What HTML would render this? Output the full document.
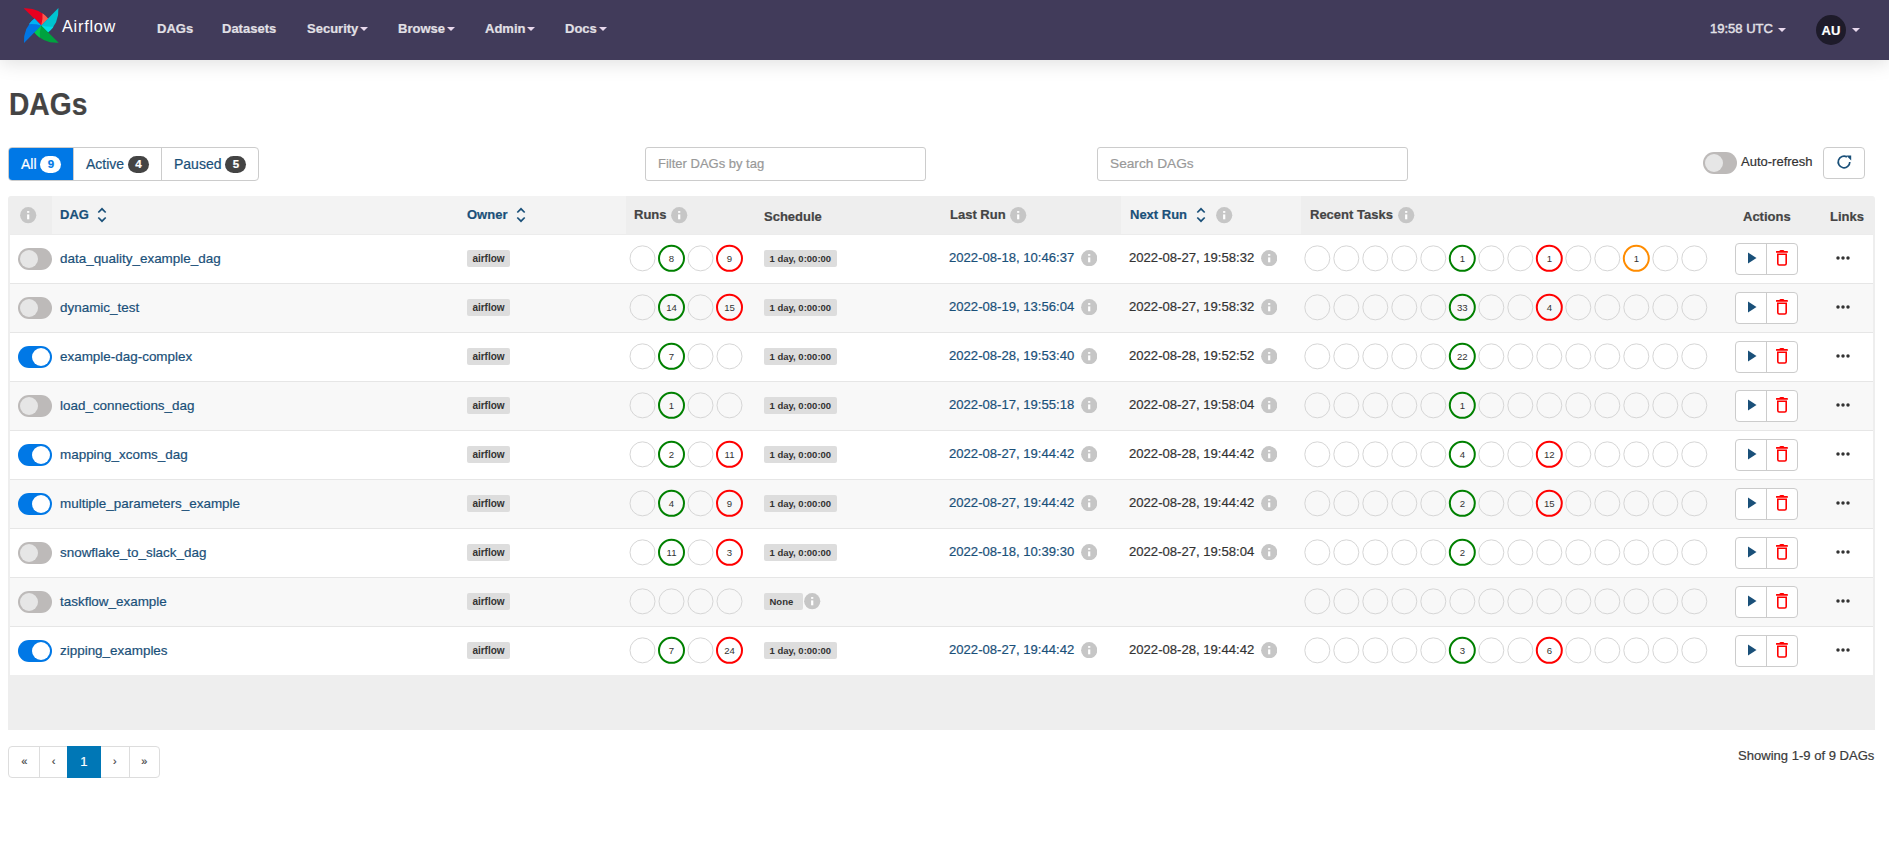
<!DOCTYPE html>
<html><head><meta charset="utf-8"><title>DAGs - Airflow</title>
<style>
*{box-sizing:border-box;margin:0;padding:0}
html,body{width:1889px;height:842px;overflow:hidden;background:#fff;font-family:"Liberation Sans",sans-serif;color:#333;-webkit-text-stroke:0.2px currentColor}
.abs{position:absolute}
.nav{position:absolute;left:0;top:0;width:1889px;height:60px;background:#413b5a;box-shadow:0 3px 18px rgba(0,0,0,.13)}
.nav .it{position:absolute;top:21px;font-size:13px;font-weight:bold;color:#e2e0e6;line-height:16px;white-space:nowrap}
.caret{display:inline-block;width:0;height:0;border-left:4px solid transparent;border-right:4px solid transparent;border-top:4px solid #e9d9ee;vertical-align:middle;margin-left:2px;position:relative;top:-0.5px}
h1{position:absolute;left:9px;top:86.5px;font-size:31px;font-weight:bold;color:#444;line-height:36px;transform:scaleX(0.91);transform-origin:0 0}
.btng{position:absolute;left:8px;top:147px;height:34px;width:251px;border:1px solid #ccc;border-radius:4px;overflow:hidden}
.btng div{position:absolute;top:0;height:32px;line-height:32px;font-size:14px;color:#1a5079;white-space:nowrap}
.badge{display:inline-block;background:#444;color:#fff;border-radius:9px;height:17px;min-width:21px;line-height:17px;font-size:11.5px;font-weight:bold;text-align:center;vertical-align:1px;padding:0 6px}
.inp{position:absolute;top:147px;height:34px;border:1px solid #ccc;border-radius:3px;font-size:14px;color:#999;line-height:32px;padding-left:12px}
.tbl{position:absolute;left:8px;top:196px;width:1867px;height:534px;background:#eee;border-radius:3px 3px 0 0}
.th{position:absolute;top:196px;height:38px;background:#eee}
.th.lt{background:#f3f3f3}
.hd{position:absolute;top:207px;font-size:13px;font-weight:bold;color:#444;line-height:16px;white-space:nowrap}
.hd.lnk{color:#1a5079}
.row{position:absolute;left:10px;width:1863px;height:49px;background:#fff;border-top:1px solid #e6e6e6}
.row.alt{background:#f8f8f8}
.tog{position:absolute;width:34px;height:22px;border-radius:11px;background:#bdbab9}
.tog::after{content:"";position:absolute;left:2px;top:2px;width:18px;height:18px;border-radius:9px;background:#e6e6e6}
.tog.on{background:#0078e6}
.tog.on::after{left:14px;background:#fff}
.dn{position:absolute;font-size:13.45px;color:#1a5079;line-height:16px;white-space:nowrap}
.own{-webkit-text-stroke:0;position:absolute;width:43px;height:17px;background:#ddd;border-radius:2px;font-size:10px;font-weight:bold;color:#333;text-align:center;line-height:17px}
.c{position:absolute;width:26px;height:26px;border-radius:13px;border:1px solid #d9d9d9;font-size:9px;color:#333;text-align:center;line-height:24px}
.cg{border:2px solid #008000;line-height:22px}
.cr{border:2px solid #ff0000;line-height:22px}
.co{border:2px solid #ffa500;line-height:22px}
.sch{-webkit-text-stroke:0;position:absolute;height:17px;background:#ddd;border-radius:2px;font-size:9.5px;font-weight:bold;color:#333;line-height:17px;padding:0 5.5px;white-space:nowrap}
.dt{position:absolute;font-size:13.1px;line-height:16px;white-space:nowrap}
.dt.lnk{color:#1a5079}
.info{position:absolute;width:16px;height:16px}
.info svg{display:block}
.sorti{position:absolute}
.act{position:absolute;width:63px;height:32px;border:1px solid #ccc;border-radius:4px;background:#fff}
.act .sep{position:absolute;left:30px;top:0;width:1px;height:30px;background:#ccc}
.dots{position:absolute;width:15px;height:4px}
</style></head><body>

<div class="nav">
<svg class="abs" style="left:22px;top:6px" width="38" height="38" viewBox="-19.2 -19.45 38 38">
<defs>
<path id="bl" d="M-17.5,-17.2 Q-2.15,-18.05 7,-6.7 L0,0 Z"/>
<path id="bt" d="M1.3,-12.3 Q4.6,-10 7,-6.7 L0,0 Q1.8,-6 1.3,-12.3 Z"/>
</defs>
<use href="#bl" fill="#e8001f"/><use href="#bt" fill="#fb5a4f"/>
<g transform="rotate(90)"><use href="#bl" fill="#00c4d0"/><use href="#bt" fill="#00dde6"/></g>
<g transform="rotate(180)"><use href="#bl" fill="#00a23f"/><use href="#bt" fill="#00c94f"/></g>
<g transform="rotate(270)"><use href="#bl" fill="#0076e4"/><use href="#bt" fill="#00b3f2"/></g>
</svg>
<div class="abs" style="left:62px;top:17.4px;font-size:16.3px;letter-spacing:0.75px;color:#fff;line-height:18px;-webkit-text-stroke:0">Airflow</div>
<div class="it" style="left:157px">DAGs</div>
<div class="it" style="left:222px">Datasets</div>
<div class="it" style="left:307px">Security<span class=caret></span></div>
<div class="it" style="left:398px">Browse<span class=caret></span></div>
<div class="it" style="left:485px">Admin<span class=caret></span></div>
<div class="it" style="left:565px">Docs<span class=caret></span></div>
<div class="it" style="left:1710px;font-weight:normal;-webkit-text-stroke:0.45px currentColor">19:58 UTC<span class="caret" style="margin-left:5.5px;top:0.2px"></span></div>
<div class="abs" style="left:1816px;top:15px;width:30px;height:30px;border-radius:15px;background:#1e1b2a;color:#fff;font-size:13px;font-weight:bold;text-align:center;line-height:31px">AU</div>
<div class="abs" style="left:1852px;top:28px;width:8px;height:4px;border-left:4px solid transparent;border-right:4px solid transparent;border-top:4px solid #e9d9ee"></div>
</div>
<h1>DAGs</h1>
<div class="btng">
<div style="left:0;width:64px;background:#0078e6;color:#fff;padding-left:12px">All <span class="badge" style="background:#fff;color:#0078e6">9</span></div>
<div style="left:64px;width:88px;border-left:1px solid #ccc;padding-left:12px">Active <span class="badge">4</span></div>
<div style="left:152px;width:97px;border-left:1px solid #ccc;padding-left:12px">Paused <span class="badge">5</span></div>
</div>
<div class="inp" style="left:645px;width:281px;font-size:13px">Filter DAGs by tag</div>
<div class="inp" style="left:1097px;width:311px;font-size:13.7px">Search DAGs</div>
<div class="tog abs" style="left:1703px;top:152px"></div>
<div class="abs" style="left:1741px;top:154px;font-size:13px;color:#333;line-height:16px">Auto-refresh</div>
<div class="abs" style="left:1823px;top:147px;width:42px;height:32px;border:1px solid #ccc;border-radius:4px"><svg style="position:absolute;left:11.9px;top:6.1px" width="16" height="16" viewBox="0 0 16 16"><path d="M13.8 8 A5.8 5.8 0 1 1 10.9 2.98" fill="none" stroke="#1a5079" stroke-width="1.7"/><path d="M10.2 1.4 L15.2 1.4 L15.2 6.6 Z" fill="#1a5079"/></svg></div>
<div class="tbl"></div>
<div class="th lt" style="left:52px;width:574px" ></div>
<div class="th lt" style="left:1121px;width:180px"></div>
<div class="abs" style="left:20px;top:207px"><span class="info" style="position:static"><svg viewBox="0 0 16.5 16.5" width="16.5" height="16.5"><circle cx="8.2" cy="8.2" r="8.1" fill="#c6c6c6"/><rect x="7.1" y="4.1" width="2.2" height="1.7" fill="#fff"/><rect x="7.1" y="7.4" width="2.2" height="4.9" fill="#fff"/></svg></span></div>
<div class="hd lnk" style="left:60px">DAG</div>
<svg class="sorti" style="left:97px;top:207px" width="10" height="16" viewBox="0 0 10 16"><path d="M1.3 5.5 L5 1.8 L8.7 5.5 M1.3 10.5 L5 14.2 L8.7 10.5" fill="none" stroke="#1a5079" stroke-width="1.7"/></svg>
<div class="hd lnk" style="left:467px">Owner</div>
<svg class="sorti" style="left:516px;top:207px" width="10" height="16" viewBox="0 0 10 16"><path d="M1.3 5.5 L5 1.8 L8.7 5.5 M1.3 10.5 L5 14.2 L8.7 10.5" fill="none" stroke="#1a5079" stroke-width="1.7"/></svg>
<div class="hd" style="left:634px">Runs</div>
<span class="info" style="left:671px;top:207px"><svg viewBox="0 0 16.5 16.5" width="16.5" height="16.5"><circle cx="8.2" cy="8.2" r="8.1" fill="#c6c6c6"/><rect x="7.1" y="4.1" width="2.2" height="1.7" fill="#fff"/><rect x="7.1" y="7.4" width="2.2" height="4.9" fill="#fff"/></svg></span>
<div class="hd" style="left:764px;top:209px">Schedule</div>
<div class="hd" style="left:950px">Last Run</div>
<span class="info" style="left:1010px;top:207px"><svg viewBox="0 0 16.5 16.5" width="16.5" height="16.5"><circle cx="8.2" cy="8.2" r="8.1" fill="#c6c6c6"/><rect x="7.1" y="4.1" width="2.2" height="1.7" fill="#fff"/><rect x="7.1" y="7.4" width="2.2" height="4.9" fill="#fff"/></svg></span>
<div class="hd lnk" style="left:1130px">Next Run</div>
<svg class="sorti" style="left:1196px;top:207px" width="10" height="16" viewBox="0 0 10 16"><path d="M1.3 5.5 L5 1.8 L8.7 5.5 M1.3 10.5 L5 14.2 L8.7 10.5" fill="none" stroke="#1a5079" stroke-width="1.7"/></svg>
<span class="info" style="left:1216px;top:207px"><svg viewBox="0 0 16.5 16.5" width="16.5" height="16.5"><circle cx="8.2" cy="8.2" r="8.1" fill="#c6c6c6"/><rect x="7.1" y="4.1" width="2.2" height="1.7" fill="#fff"/><rect x="7.1" y="7.4" width="2.2" height="4.9" fill="#fff"/></svg></span>
<div class="hd" style="left:1310px">Recent Tasks</div>
<span class="info" style="left:1398px;top:207px"><svg viewBox="0 0 16.5 16.5" width="16.5" height="16.5"><circle cx="8.2" cy="8.2" r="8.1" fill="#c6c6c6"/><rect x="7.1" y="4.1" width="2.2" height="1.7" fill="#fff"/><rect x="7.1" y="7.4" width="2.2" height="4.9" fill="#fff"/></svg></span>
<div class="hd" style="left:1743px;top:209px">Actions</div>
<div class="hd" style="left:1830px;top:209px">Links</div>
<div class="row" style="top:234px;border-top-color:#ececec"></div>
<div class="tog" style="left:18px;top:248px"></div>
<div class="dn" style="left:60px;top:251px">data_quality_example_dag</div>
<div class="own" style="left:467px;top:250px">airflow</div>
<svg class="abs" style="left:626px;top:234px" width="156" height="49" viewBox="626 234 156 49"><circle cx="642.5" cy="258.35" r="12.5" fill="none" stroke="#d6d6d6" stroke-width="1"/><circle cx="671.5" cy="258.35" r="12.5" fill="none" stroke="#008000" stroke-width="2"/><text x="671.5" y="261.85" text-anchor="middle" font-size="9.6" fill="#333" style="-webkit-text-stroke:0">8</text><circle cx="700.5" cy="258.35" r="12.5" fill="none" stroke="#d6d6d6" stroke-width="1"/><circle cx="729.5" cy="258.35" r="12.5" fill="none" stroke="#ff0000" stroke-width="2"/><text x="729.5" y="261.85" text-anchor="middle" font-size="9.6" fill="#333" style="-webkit-text-stroke:0">9</text></svg>
<div class="sch" style="left:764px;top:250px">1 day, 0:00:00</div>
<div class="dt lnk" style="left:949px;top:250px">2022-08-18, 10:46:37</div>
<span class="info" style="left:1080.5px;top:249.8px"><svg viewBox="0 0 16.5 16.5" width="16.5" height="16.5"><circle cx="8.2" cy="8.2" r="8.1" fill="#c6c6c6"/><rect x="7.1" y="4.1" width="2.2" height="1.7" fill="#fff"/><rect x="7.1" y="7.4" width="2.2" height="4.9" fill="#fff"/></svg></span>
<div class="dt" style="left:1129px;top:250px">2022-08-27, 19:58:32</div>
<span class="info" style="left:1260.5px;top:249.8px"><svg viewBox="0 0 16.5 16.5" width="16.5" height="16.5"><circle cx="8.2" cy="8.2" r="8.1" fill="#c6c6c6"/><rect x="7.1" y="4.1" width="2.2" height="1.7" fill="#fff"/><rect x="7.1" y="7.4" width="2.2" height="4.9" fill="#fff"/></svg></span>
<svg class="abs" style="left:1300px;top:234px" width="446" height="49" viewBox="1300 234 446 49"><circle cx="1317.3" cy="258.35" r="12.5" fill="none" stroke="#d6d6d6" stroke-width="1"/><circle cx="1346.3" cy="258.35" r="12.5" fill="none" stroke="#d6d6d6" stroke-width="1"/><circle cx="1375.3" cy="258.35" r="12.5" fill="none" stroke="#d6d6d6" stroke-width="1"/><circle cx="1404.3" cy="258.35" r="12.5" fill="none" stroke="#d6d6d6" stroke-width="1"/><circle cx="1433.3" cy="258.35" r="12.5" fill="none" stroke="#d6d6d6" stroke-width="1"/><circle cx="1462.3" cy="258.35" r="12.5" fill="none" stroke="#008000" stroke-width="2"/><text x="1462.3" y="261.85" text-anchor="middle" font-size="9.6" fill="#333" style="-webkit-text-stroke:0">1</text><circle cx="1491.3" cy="258.35" r="12.5" fill="none" stroke="#d6d6d6" stroke-width="1"/><circle cx="1520.3" cy="258.35" r="12.5" fill="none" stroke="#d6d6d6" stroke-width="1"/><circle cx="1549.3" cy="258.35" r="12.5" fill="none" stroke="#ff0000" stroke-width="2"/><text x="1549.3" y="261.85" text-anchor="middle" font-size="9.6" fill="#333" style="-webkit-text-stroke:0">1</text><circle cx="1578.3" cy="258.35" r="12.5" fill="none" stroke="#d6d6d6" stroke-width="1"/><circle cx="1607.3" cy="258.35" r="12.5" fill="none" stroke="#d6d6d6" stroke-width="1"/><circle cx="1636.3" cy="258.35" r="12.5" fill="none" stroke="#ff8c00" stroke-width="2"/><text x="1636.3" y="261.85" text-anchor="middle" font-size="9.6" fill="#333" style="-webkit-text-stroke:0">1</text><circle cx="1665.3" cy="258.35" r="12.5" fill="none" stroke="#d6d6d6" stroke-width="1"/><circle cx="1694.3" cy="258.35" r="12.5" fill="none" stroke="#d6d6d6" stroke-width="1"/></svg>
<div class="act" style="left:1735px;top:243px"><div class="sep"></div><svg style="position:absolute;left:11px;top:7.5px" width="10" height="12" viewBox="0 0 10 12"><path d="M1 0.5 L9.5 6 L1 11.5 Z" fill="#1a5079"/></svg><svg style="position:absolute;left:40px;top:6px" width="12" height="16" viewBox="0 0 12 16"><path d="M3.8 1.2 Q5.85 -0.2 7.9 1.2" stroke="#ff0000" stroke-width="1.4" fill="none"/><path d="M0.6 1.9 H11.1" stroke="#ff0000" stroke-width="1.8" stroke-linecap="round" fill="none"/><path d="M1.8 4.2 V13.6 Q1.8 15 3.2 15 H8.8 Q10.2 15 10.2 13.6 V4.2 Z" stroke="#ff0000" stroke-width="1.6" fill="none"/></svg></div>
<svg class="dots" style="left:1836px;top:256px" viewBox="0 0 15 4"><circle cx="2" cy="2" r="1.75" fill="#333"/><circle cx="7" cy="2" r="1.75" fill="#333"/><circle cx="12" cy="2" r="1.75" fill="#333"/></svg>
<div class="row alt" style="top:283px"></div>
<div class="tog" style="left:18px;top:297px"></div>
<div class="dn" style="left:60px;top:300px">dynamic_test</div>
<div class="own" style="left:467px;top:299px">airflow</div>
<svg class="abs" style="left:626px;top:283px" width="156" height="49" viewBox="626 283 156 49"><circle cx="642.5" cy="307.35" r="12.5" fill="none" stroke="#d6d6d6" stroke-width="1"/><circle cx="671.5" cy="307.35" r="12.5" fill="none" stroke="#008000" stroke-width="2"/><text x="671.5" y="310.85" text-anchor="middle" font-size="9.6" fill="#333" style="-webkit-text-stroke:0">14</text><circle cx="700.5" cy="307.35" r="12.5" fill="none" stroke="#d6d6d6" stroke-width="1"/><circle cx="729.5" cy="307.35" r="12.5" fill="none" stroke="#ff0000" stroke-width="2"/><text x="729.5" y="310.85" text-anchor="middle" font-size="9.6" fill="#333" style="-webkit-text-stroke:0">15</text></svg>
<div class="sch" style="left:764px;top:299px">1 day, 0:00:00</div>
<div class="dt lnk" style="left:949px;top:299px">2022-08-19, 13:56:04</div>
<span class="info" style="left:1080.5px;top:298.8px"><svg viewBox="0 0 16.5 16.5" width="16.5" height="16.5"><circle cx="8.2" cy="8.2" r="8.1" fill="#c6c6c6"/><rect x="7.1" y="4.1" width="2.2" height="1.7" fill="#fff"/><rect x="7.1" y="7.4" width="2.2" height="4.9" fill="#fff"/></svg></span>
<div class="dt" style="left:1129px;top:299px">2022-08-27, 19:58:32</div>
<span class="info" style="left:1260.5px;top:298.8px"><svg viewBox="0 0 16.5 16.5" width="16.5" height="16.5"><circle cx="8.2" cy="8.2" r="8.1" fill="#c6c6c6"/><rect x="7.1" y="4.1" width="2.2" height="1.7" fill="#fff"/><rect x="7.1" y="7.4" width="2.2" height="4.9" fill="#fff"/></svg></span>
<svg class="abs" style="left:1300px;top:283px" width="446" height="49" viewBox="1300 283 446 49"><circle cx="1317.3" cy="307.35" r="12.5" fill="none" stroke="#d6d6d6" stroke-width="1"/><circle cx="1346.3" cy="307.35" r="12.5" fill="none" stroke="#d6d6d6" stroke-width="1"/><circle cx="1375.3" cy="307.35" r="12.5" fill="none" stroke="#d6d6d6" stroke-width="1"/><circle cx="1404.3" cy="307.35" r="12.5" fill="none" stroke="#d6d6d6" stroke-width="1"/><circle cx="1433.3" cy="307.35" r="12.5" fill="none" stroke="#d6d6d6" stroke-width="1"/><circle cx="1462.3" cy="307.35" r="12.5" fill="none" stroke="#008000" stroke-width="2"/><text x="1462.3" y="310.85" text-anchor="middle" font-size="9.6" fill="#333" style="-webkit-text-stroke:0">33</text><circle cx="1491.3" cy="307.35" r="12.5" fill="none" stroke="#d6d6d6" stroke-width="1"/><circle cx="1520.3" cy="307.35" r="12.5" fill="none" stroke="#d6d6d6" stroke-width="1"/><circle cx="1549.3" cy="307.35" r="12.5" fill="none" stroke="#ff0000" stroke-width="2"/><text x="1549.3" y="310.85" text-anchor="middle" font-size="9.6" fill="#333" style="-webkit-text-stroke:0">4</text><circle cx="1578.3" cy="307.35" r="12.5" fill="none" stroke="#d6d6d6" stroke-width="1"/><circle cx="1607.3" cy="307.35" r="12.5" fill="none" stroke="#d6d6d6" stroke-width="1"/><circle cx="1636.3" cy="307.35" r="12.5" fill="none" stroke="#d6d6d6" stroke-width="1"/><circle cx="1665.3" cy="307.35" r="12.5" fill="none" stroke="#d6d6d6" stroke-width="1"/><circle cx="1694.3" cy="307.35" r="12.5" fill="none" stroke="#d6d6d6" stroke-width="1"/></svg>
<div class="act" style="left:1735px;top:292px"><div class="sep"></div><svg style="position:absolute;left:11px;top:7.5px" width="10" height="12" viewBox="0 0 10 12"><path d="M1 0.5 L9.5 6 L1 11.5 Z" fill="#1a5079"/></svg><svg style="position:absolute;left:40px;top:6px" width="12" height="16" viewBox="0 0 12 16"><path d="M3.8 1.2 Q5.85 -0.2 7.9 1.2" stroke="#ff0000" stroke-width="1.4" fill="none"/><path d="M0.6 1.9 H11.1" stroke="#ff0000" stroke-width="1.8" stroke-linecap="round" fill="none"/><path d="M1.8 4.2 V13.6 Q1.8 15 3.2 15 H8.8 Q10.2 15 10.2 13.6 V4.2 Z" stroke="#ff0000" stroke-width="1.6" fill="none"/></svg></div>
<svg class="dots" style="left:1836px;top:305px" viewBox="0 0 15 4"><circle cx="2" cy="2" r="1.75" fill="#333"/><circle cx="7" cy="2" r="1.75" fill="#333"/><circle cx="12" cy="2" r="1.75" fill="#333"/></svg>
<div class="row" style="top:332px"></div>
<div class="tog on" style="left:18px;top:346px"></div>
<div class="dn" style="left:60px;top:349px">example-dag-complex</div>
<div class="own" style="left:467px;top:348px">airflow</div>
<svg class="abs" style="left:626px;top:332px" width="156" height="49" viewBox="626 332 156 49"><circle cx="642.5" cy="356.35" r="12.5" fill="none" stroke="#d6d6d6" stroke-width="1"/><circle cx="671.5" cy="356.35" r="12.5" fill="none" stroke="#008000" stroke-width="2"/><text x="671.5" y="359.85" text-anchor="middle" font-size="9.6" fill="#333" style="-webkit-text-stroke:0">7</text><circle cx="700.5" cy="356.35" r="12.5" fill="none" stroke="#d6d6d6" stroke-width="1"/><circle cx="729.5" cy="356.35" r="12.5" fill="none" stroke="#d6d6d6" stroke-width="1"/></svg>
<div class="sch" style="left:764px;top:348px">1 day, 0:00:00</div>
<div class="dt lnk" style="left:949px;top:348px">2022-08-28, 19:53:40</div>
<span class="info" style="left:1080.5px;top:347.8px"><svg viewBox="0 0 16.5 16.5" width="16.5" height="16.5"><circle cx="8.2" cy="8.2" r="8.1" fill="#c6c6c6"/><rect x="7.1" y="4.1" width="2.2" height="1.7" fill="#fff"/><rect x="7.1" y="7.4" width="2.2" height="4.9" fill="#fff"/></svg></span>
<div class="dt" style="left:1129px;top:348px">2022-08-28, 19:52:52</div>
<span class="info" style="left:1260.5px;top:347.8px"><svg viewBox="0 0 16.5 16.5" width="16.5" height="16.5"><circle cx="8.2" cy="8.2" r="8.1" fill="#c6c6c6"/><rect x="7.1" y="4.1" width="2.2" height="1.7" fill="#fff"/><rect x="7.1" y="7.4" width="2.2" height="4.9" fill="#fff"/></svg></span>
<svg class="abs" style="left:1300px;top:332px" width="446" height="49" viewBox="1300 332 446 49"><circle cx="1317.3" cy="356.35" r="12.5" fill="none" stroke="#d6d6d6" stroke-width="1"/><circle cx="1346.3" cy="356.35" r="12.5" fill="none" stroke="#d6d6d6" stroke-width="1"/><circle cx="1375.3" cy="356.35" r="12.5" fill="none" stroke="#d6d6d6" stroke-width="1"/><circle cx="1404.3" cy="356.35" r="12.5" fill="none" stroke="#d6d6d6" stroke-width="1"/><circle cx="1433.3" cy="356.35" r="12.5" fill="none" stroke="#d6d6d6" stroke-width="1"/><circle cx="1462.3" cy="356.35" r="12.5" fill="none" stroke="#008000" stroke-width="2"/><text x="1462.3" y="359.85" text-anchor="middle" font-size="9.6" fill="#333" style="-webkit-text-stroke:0">22</text><circle cx="1491.3" cy="356.35" r="12.5" fill="none" stroke="#d6d6d6" stroke-width="1"/><circle cx="1520.3" cy="356.35" r="12.5" fill="none" stroke="#d6d6d6" stroke-width="1"/><circle cx="1549.3" cy="356.35" r="12.5" fill="none" stroke="#d6d6d6" stroke-width="1"/><circle cx="1578.3" cy="356.35" r="12.5" fill="none" stroke="#d6d6d6" stroke-width="1"/><circle cx="1607.3" cy="356.35" r="12.5" fill="none" stroke="#d6d6d6" stroke-width="1"/><circle cx="1636.3" cy="356.35" r="12.5" fill="none" stroke="#d6d6d6" stroke-width="1"/><circle cx="1665.3" cy="356.35" r="12.5" fill="none" stroke="#d6d6d6" stroke-width="1"/><circle cx="1694.3" cy="356.35" r="12.5" fill="none" stroke="#d6d6d6" stroke-width="1"/></svg>
<div class="act" style="left:1735px;top:341px"><div class="sep"></div><svg style="position:absolute;left:11px;top:7.5px" width="10" height="12" viewBox="0 0 10 12"><path d="M1 0.5 L9.5 6 L1 11.5 Z" fill="#1a5079"/></svg><svg style="position:absolute;left:40px;top:6px" width="12" height="16" viewBox="0 0 12 16"><path d="M3.8 1.2 Q5.85 -0.2 7.9 1.2" stroke="#ff0000" stroke-width="1.4" fill="none"/><path d="M0.6 1.9 H11.1" stroke="#ff0000" stroke-width="1.8" stroke-linecap="round" fill="none"/><path d="M1.8 4.2 V13.6 Q1.8 15 3.2 15 H8.8 Q10.2 15 10.2 13.6 V4.2 Z" stroke="#ff0000" stroke-width="1.6" fill="none"/></svg></div>
<svg class="dots" style="left:1836px;top:354px" viewBox="0 0 15 4"><circle cx="2" cy="2" r="1.75" fill="#333"/><circle cx="7" cy="2" r="1.75" fill="#333"/><circle cx="12" cy="2" r="1.75" fill="#333"/></svg>
<div class="row alt" style="top:381px"></div>
<div class="tog" style="left:18px;top:395px"></div>
<div class="dn" style="left:60px;top:398px">load_connections_dag</div>
<div class="own" style="left:467px;top:397px">airflow</div>
<svg class="abs" style="left:626px;top:381px" width="156" height="49" viewBox="626 381 156 49"><circle cx="642.5" cy="405.35" r="12.5" fill="none" stroke="#d6d6d6" stroke-width="1"/><circle cx="671.5" cy="405.35" r="12.5" fill="none" stroke="#008000" stroke-width="2"/><text x="671.5" y="408.85" text-anchor="middle" font-size="9.6" fill="#333" style="-webkit-text-stroke:0">1</text><circle cx="700.5" cy="405.35" r="12.5" fill="none" stroke="#d6d6d6" stroke-width="1"/><circle cx="729.5" cy="405.35" r="12.5" fill="none" stroke="#d6d6d6" stroke-width="1"/></svg>
<div class="sch" style="left:764px;top:397px">1 day, 0:00:00</div>
<div class="dt lnk" style="left:949px;top:397px">2022-08-17, 19:55:18</div>
<span class="info" style="left:1080.5px;top:396.8px"><svg viewBox="0 0 16.5 16.5" width="16.5" height="16.5"><circle cx="8.2" cy="8.2" r="8.1" fill="#c6c6c6"/><rect x="7.1" y="4.1" width="2.2" height="1.7" fill="#fff"/><rect x="7.1" y="7.4" width="2.2" height="4.9" fill="#fff"/></svg></span>
<div class="dt" style="left:1129px;top:397px">2022-08-27, 19:58:04</div>
<span class="info" style="left:1260.5px;top:396.8px"><svg viewBox="0 0 16.5 16.5" width="16.5" height="16.5"><circle cx="8.2" cy="8.2" r="8.1" fill="#c6c6c6"/><rect x="7.1" y="4.1" width="2.2" height="1.7" fill="#fff"/><rect x="7.1" y="7.4" width="2.2" height="4.9" fill="#fff"/></svg></span>
<svg class="abs" style="left:1300px;top:381px" width="446" height="49" viewBox="1300 381 446 49"><circle cx="1317.3" cy="405.35" r="12.5" fill="none" stroke="#d6d6d6" stroke-width="1"/><circle cx="1346.3" cy="405.35" r="12.5" fill="none" stroke="#d6d6d6" stroke-width="1"/><circle cx="1375.3" cy="405.35" r="12.5" fill="none" stroke="#d6d6d6" stroke-width="1"/><circle cx="1404.3" cy="405.35" r="12.5" fill="none" stroke="#d6d6d6" stroke-width="1"/><circle cx="1433.3" cy="405.35" r="12.5" fill="none" stroke="#d6d6d6" stroke-width="1"/><circle cx="1462.3" cy="405.35" r="12.5" fill="none" stroke="#008000" stroke-width="2"/><text x="1462.3" y="408.85" text-anchor="middle" font-size="9.6" fill="#333" style="-webkit-text-stroke:0">1</text><circle cx="1491.3" cy="405.35" r="12.5" fill="none" stroke="#d6d6d6" stroke-width="1"/><circle cx="1520.3" cy="405.35" r="12.5" fill="none" stroke="#d6d6d6" stroke-width="1"/><circle cx="1549.3" cy="405.35" r="12.5" fill="none" stroke="#d6d6d6" stroke-width="1"/><circle cx="1578.3" cy="405.35" r="12.5" fill="none" stroke="#d6d6d6" stroke-width="1"/><circle cx="1607.3" cy="405.35" r="12.5" fill="none" stroke="#d6d6d6" stroke-width="1"/><circle cx="1636.3" cy="405.35" r="12.5" fill="none" stroke="#d6d6d6" stroke-width="1"/><circle cx="1665.3" cy="405.35" r="12.5" fill="none" stroke="#d6d6d6" stroke-width="1"/><circle cx="1694.3" cy="405.35" r="12.5" fill="none" stroke="#d6d6d6" stroke-width="1"/></svg>
<div class="act" style="left:1735px;top:390px"><div class="sep"></div><svg style="position:absolute;left:11px;top:7.5px" width="10" height="12" viewBox="0 0 10 12"><path d="M1 0.5 L9.5 6 L1 11.5 Z" fill="#1a5079"/></svg><svg style="position:absolute;left:40px;top:6px" width="12" height="16" viewBox="0 0 12 16"><path d="M3.8 1.2 Q5.85 -0.2 7.9 1.2" stroke="#ff0000" stroke-width="1.4" fill="none"/><path d="M0.6 1.9 H11.1" stroke="#ff0000" stroke-width="1.8" stroke-linecap="round" fill="none"/><path d="M1.8 4.2 V13.6 Q1.8 15 3.2 15 H8.8 Q10.2 15 10.2 13.6 V4.2 Z" stroke="#ff0000" stroke-width="1.6" fill="none"/></svg></div>
<svg class="dots" style="left:1836px;top:403px" viewBox="0 0 15 4"><circle cx="2" cy="2" r="1.75" fill="#333"/><circle cx="7" cy="2" r="1.75" fill="#333"/><circle cx="12" cy="2" r="1.75" fill="#333"/></svg>
<div class="row" style="top:430px"></div>
<div class="tog on" style="left:18px;top:444px"></div>
<div class="dn" style="left:60px;top:447px">mapping_xcoms_dag</div>
<div class="own" style="left:467px;top:446px">airflow</div>
<svg class="abs" style="left:626px;top:430px" width="156" height="49" viewBox="626 430 156 49"><circle cx="642.5" cy="454.35" r="12.5" fill="none" stroke="#d6d6d6" stroke-width="1"/><circle cx="671.5" cy="454.35" r="12.5" fill="none" stroke="#008000" stroke-width="2"/><text x="671.5" y="457.85" text-anchor="middle" font-size="9.6" fill="#333" style="-webkit-text-stroke:0">2</text><circle cx="700.5" cy="454.35" r="12.5" fill="none" stroke="#d6d6d6" stroke-width="1"/><circle cx="729.5" cy="454.35" r="12.5" fill="none" stroke="#ff0000" stroke-width="2"/><text x="729.5" y="457.85" text-anchor="middle" font-size="9.6" fill="#333" style="-webkit-text-stroke:0">11</text></svg>
<div class="sch" style="left:764px;top:446px">1 day, 0:00:00</div>
<div class="dt lnk" style="left:949px;top:446px">2022-08-27, 19:44:42</div>
<span class="info" style="left:1080.5px;top:445.8px"><svg viewBox="0 0 16.5 16.5" width="16.5" height="16.5"><circle cx="8.2" cy="8.2" r="8.1" fill="#c6c6c6"/><rect x="7.1" y="4.1" width="2.2" height="1.7" fill="#fff"/><rect x="7.1" y="7.4" width="2.2" height="4.9" fill="#fff"/></svg></span>
<div class="dt" style="left:1129px;top:446px">2022-08-28, 19:44:42</div>
<span class="info" style="left:1260.5px;top:445.8px"><svg viewBox="0 0 16.5 16.5" width="16.5" height="16.5"><circle cx="8.2" cy="8.2" r="8.1" fill="#c6c6c6"/><rect x="7.1" y="4.1" width="2.2" height="1.7" fill="#fff"/><rect x="7.1" y="7.4" width="2.2" height="4.9" fill="#fff"/></svg></span>
<svg class="abs" style="left:1300px;top:430px" width="446" height="49" viewBox="1300 430 446 49"><circle cx="1317.3" cy="454.35" r="12.5" fill="none" stroke="#d6d6d6" stroke-width="1"/><circle cx="1346.3" cy="454.35" r="12.5" fill="none" stroke="#d6d6d6" stroke-width="1"/><circle cx="1375.3" cy="454.35" r="12.5" fill="none" stroke="#d6d6d6" stroke-width="1"/><circle cx="1404.3" cy="454.35" r="12.5" fill="none" stroke="#d6d6d6" stroke-width="1"/><circle cx="1433.3" cy="454.35" r="12.5" fill="none" stroke="#d6d6d6" stroke-width="1"/><circle cx="1462.3" cy="454.35" r="12.5" fill="none" stroke="#008000" stroke-width="2"/><text x="1462.3" y="457.85" text-anchor="middle" font-size="9.6" fill="#333" style="-webkit-text-stroke:0">4</text><circle cx="1491.3" cy="454.35" r="12.5" fill="none" stroke="#d6d6d6" stroke-width="1"/><circle cx="1520.3" cy="454.35" r="12.5" fill="none" stroke="#d6d6d6" stroke-width="1"/><circle cx="1549.3" cy="454.35" r="12.5" fill="none" stroke="#ff0000" stroke-width="2"/><text x="1549.3" y="457.85" text-anchor="middle" font-size="9.6" fill="#333" style="-webkit-text-stroke:0">12</text><circle cx="1578.3" cy="454.35" r="12.5" fill="none" stroke="#d6d6d6" stroke-width="1"/><circle cx="1607.3" cy="454.35" r="12.5" fill="none" stroke="#d6d6d6" stroke-width="1"/><circle cx="1636.3" cy="454.35" r="12.5" fill="none" stroke="#d6d6d6" stroke-width="1"/><circle cx="1665.3" cy="454.35" r="12.5" fill="none" stroke="#d6d6d6" stroke-width="1"/><circle cx="1694.3" cy="454.35" r="12.5" fill="none" stroke="#d6d6d6" stroke-width="1"/></svg>
<div class="act" style="left:1735px;top:439px"><div class="sep"></div><svg style="position:absolute;left:11px;top:7.5px" width="10" height="12" viewBox="0 0 10 12"><path d="M1 0.5 L9.5 6 L1 11.5 Z" fill="#1a5079"/></svg><svg style="position:absolute;left:40px;top:6px" width="12" height="16" viewBox="0 0 12 16"><path d="M3.8 1.2 Q5.85 -0.2 7.9 1.2" stroke="#ff0000" stroke-width="1.4" fill="none"/><path d="M0.6 1.9 H11.1" stroke="#ff0000" stroke-width="1.8" stroke-linecap="round" fill="none"/><path d="M1.8 4.2 V13.6 Q1.8 15 3.2 15 H8.8 Q10.2 15 10.2 13.6 V4.2 Z" stroke="#ff0000" stroke-width="1.6" fill="none"/></svg></div>
<svg class="dots" style="left:1836px;top:452px" viewBox="0 0 15 4"><circle cx="2" cy="2" r="1.75" fill="#333"/><circle cx="7" cy="2" r="1.75" fill="#333"/><circle cx="12" cy="2" r="1.75" fill="#333"/></svg>
<div class="row alt" style="top:479px"></div>
<div class="tog on" style="left:18px;top:493px"></div>
<div class="dn" style="left:60px;top:496px">multiple_parameters_example</div>
<div class="own" style="left:467px;top:495px">airflow</div>
<svg class="abs" style="left:626px;top:479px" width="156" height="49" viewBox="626 479 156 49"><circle cx="642.5" cy="503.35" r="12.5" fill="none" stroke="#d6d6d6" stroke-width="1"/><circle cx="671.5" cy="503.35" r="12.5" fill="none" stroke="#008000" stroke-width="2"/><text x="671.5" y="506.85" text-anchor="middle" font-size="9.6" fill="#333" style="-webkit-text-stroke:0">4</text><circle cx="700.5" cy="503.35" r="12.5" fill="none" stroke="#d6d6d6" stroke-width="1"/><circle cx="729.5" cy="503.35" r="12.5" fill="none" stroke="#ff0000" stroke-width="2"/><text x="729.5" y="506.85" text-anchor="middle" font-size="9.6" fill="#333" style="-webkit-text-stroke:0">9</text></svg>
<div class="sch" style="left:764px;top:495px">1 day, 0:00:00</div>
<div class="dt lnk" style="left:949px;top:495px">2022-08-27, 19:44:42</div>
<span class="info" style="left:1080.5px;top:494.8px"><svg viewBox="0 0 16.5 16.5" width="16.5" height="16.5"><circle cx="8.2" cy="8.2" r="8.1" fill="#c6c6c6"/><rect x="7.1" y="4.1" width="2.2" height="1.7" fill="#fff"/><rect x="7.1" y="7.4" width="2.2" height="4.9" fill="#fff"/></svg></span>
<div class="dt" style="left:1129px;top:495px">2022-08-28, 19:44:42</div>
<span class="info" style="left:1260.5px;top:494.8px"><svg viewBox="0 0 16.5 16.5" width="16.5" height="16.5"><circle cx="8.2" cy="8.2" r="8.1" fill="#c6c6c6"/><rect x="7.1" y="4.1" width="2.2" height="1.7" fill="#fff"/><rect x="7.1" y="7.4" width="2.2" height="4.9" fill="#fff"/></svg></span>
<svg class="abs" style="left:1300px;top:479px" width="446" height="49" viewBox="1300 479 446 49"><circle cx="1317.3" cy="503.35" r="12.5" fill="none" stroke="#d6d6d6" stroke-width="1"/><circle cx="1346.3" cy="503.35" r="12.5" fill="none" stroke="#d6d6d6" stroke-width="1"/><circle cx="1375.3" cy="503.35" r="12.5" fill="none" stroke="#d6d6d6" stroke-width="1"/><circle cx="1404.3" cy="503.35" r="12.5" fill="none" stroke="#d6d6d6" stroke-width="1"/><circle cx="1433.3" cy="503.35" r="12.5" fill="none" stroke="#d6d6d6" stroke-width="1"/><circle cx="1462.3" cy="503.35" r="12.5" fill="none" stroke="#008000" stroke-width="2"/><text x="1462.3" y="506.85" text-anchor="middle" font-size="9.6" fill="#333" style="-webkit-text-stroke:0">2</text><circle cx="1491.3" cy="503.35" r="12.5" fill="none" stroke="#d6d6d6" stroke-width="1"/><circle cx="1520.3" cy="503.35" r="12.5" fill="none" stroke="#d6d6d6" stroke-width="1"/><circle cx="1549.3" cy="503.35" r="12.5" fill="none" stroke="#ff0000" stroke-width="2"/><text x="1549.3" y="506.85" text-anchor="middle" font-size="9.6" fill="#333" style="-webkit-text-stroke:0">15</text><circle cx="1578.3" cy="503.35" r="12.5" fill="none" stroke="#d6d6d6" stroke-width="1"/><circle cx="1607.3" cy="503.35" r="12.5" fill="none" stroke="#d6d6d6" stroke-width="1"/><circle cx="1636.3" cy="503.35" r="12.5" fill="none" stroke="#d6d6d6" stroke-width="1"/><circle cx="1665.3" cy="503.35" r="12.5" fill="none" stroke="#d6d6d6" stroke-width="1"/><circle cx="1694.3" cy="503.35" r="12.5" fill="none" stroke="#d6d6d6" stroke-width="1"/></svg>
<div class="act" style="left:1735px;top:488px"><div class="sep"></div><svg style="position:absolute;left:11px;top:7.5px" width="10" height="12" viewBox="0 0 10 12"><path d="M1 0.5 L9.5 6 L1 11.5 Z" fill="#1a5079"/></svg><svg style="position:absolute;left:40px;top:6px" width="12" height="16" viewBox="0 0 12 16"><path d="M3.8 1.2 Q5.85 -0.2 7.9 1.2" stroke="#ff0000" stroke-width="1.4" fill="none"/><path d="M0.6 1.9 H11.1" stroke="#ff0000" stroke-width="1.8" stroke-linecap="round" fill="none"/><path d="M1.8 4.2 V13.6 Q1.8 15 3.2 15 H8.8 Q10.2 15 10.2 13.6 V4.2 Z" stroke="#ff0000" stroke-width="1.6" fill="none"/></svg></div>
<svg class="dots" style="left:1836px;top:501px" viewBox="0 0 15 4"><circle cx="2" cy="2" r="1.75" fill="#333"/><circle cx="7" cy="2" r="1.75" fill="#333"/><circle cx="12" cy="2" r="1.75" fill="#333"/></svg>
<div class="row" style="top:528px"></div>
<div class="tog" style="left:18px;top:542px"></div>
<div class="dn" style="left:60px;top:545px">snowflake_to_slack_dag</div>
<div class="own" style="left:467px;top:544px">airflow</div>
<svg class="abs" style="left:626px;top:528px" width="156" height="49" viewBox="626 528 156 49"><circle cx="642.5" cy="552.35" r="12.5" fill="none" stroke="#d6d6d6" stroke-width="1"/><circle cx="671.5" cy="552.35" r="12.5" fill="none" stroke="#008000" stroke-width="2"/><text x="671.5" y="555.85" text-anchor="middle" font-size="9.6" fill="#333" style="-webkit-text-stroke:0">11</text><circle cx="700.5" cy="552.35" r="12.5" fill="none" stroke="#d6d6d6" stroke-width="1"/><circle cx="729.5" cy="552.35" r="12.5" fill="none" stroke="#ff0000" stroke-width="2"/><text x="729.5" y="555.85" text-anchor="middle" font-size="9.6" fill="#333" style="-webkit-text-stroke:0">3</text></svg>
<div class="sch" style="left:764px;top:544px">1 day, 0:00:00</div>
<div class="dt lnk" style="left:949px;top:544px">2022-08-18, 10:39:30</div>
<span class="info" style="left:1080.5px;top:543.8px"><svg viewBox="0 0 16.5 16.5" width="16.5" height="16.5"><circle cx="8.2" cy="8.2" r="8.1" fill="#c6c6c6"/><rect x="7.1" y="4.1" width="2.2" height="1.7" fill="#fff"/><rect x="7.1" y="7.4" width="2.2" height="4.9" fill="#fff"/></svg></span>
<div class="dt" style="left:1129px;top:544px">2022-08-27, 19:58:04</div>
<span class="info" style="left:1260.5px;top:543.8px"><svg viewBox="0 0 16.5 16.5" width="16.5" height="16.5"><circle cx="8.2" cy="8.2" r="8.1" fill="#c6c6c6"/><rect x="7.1" y="4.1" width="2.2" height="1.7" fill="#fff"/><rect x="7.1" y="7.4" width="2.2" height="4.9" fill="#fff"/></svg></span>
<svg class="abs" style="left:1300px;top:528px" width="446" height="49" viewBox="1300 528 446 49"><circle cx="1317.3" cy="552.35" r="12.5" fill="none" stroke="#d6d6d6" stroke-width="1"/><circle cx="1346.3" cy="552.35" r="12.5" fill="none" stroke="#d6d6d6" stroke-width="1"/><circle cx="1375.3" cy="552.35" r="12.5" fill="none" stroke="#d6d6d6" stroke-width="1"/><circle cx="1404.3" cy="552.35" r="12.5" fill="none" stroke="#d6d6d6" stroke-width="1"/><circle cx="1433.3" cy="552.35" r="12.5" fill="none" stroke="#d6d6d6" stroke-width="1"/><circle cx="1462.3" cy="552.35" r="12.5" fill="none" stroke="#008000" stroke-width="2"/><text x="1462.3" y="555.85" text-anchor="middle" font-size="9.6" fill="#333" style="-webkit-text-stroke:0">2</text><circle cx="1491.3" cy="552.35" r="12.5" fill="none" stroke="#d6d6d6" stroke-width="1"/><circle cx="1520.3" cy="552.35" r="12.5" fill="none" stroke="#d6d6d6" stroke-width="1"/><circle cx="1549.3" cy="552.35" r="12.5" fill="none" stroke="#d6d6d6" stroke-width="1"/><circle cx="1578.3" cy="552.35" r="12.5" fill="none" stroke="#d6d6d6" stroke-width="1"/><circle cx="1607.3" cy="552.35" r="12.5" fill="none" stroke="#d6d6d6" stroke-width="1"/><circle cx="1636.3" cy="552.35" r="12.5" fill="none" stroke="#d6d6d6" stroke-width="1"/><circle cx="1665.3" cy="552.35" r="12.5" fill="none" stroke="#d6d6d6" stroke-width="1"/><circle cx="1694.3" cy="552.35" r="12.5" fill="none" stroke="#d6d6d6" stroke-width="1"/></svg>
<div class="act" style="left:1735px;top:537px"><div class="sep"></div><svg style="position:absolute;left:11px;top:7.5px" width="10" height="12" viewBox="0 0 10 12"><path d="M1 0.5 L9.5 6 L1 11.5 Z" fill="#1a5079"/></svg><svg style="position:absolute;left:40px;top:6px" width="12" height="16" viewBox="0 0 12 16"><path d="M3.8 1.2 Q5.85 -0.2 7.9 1.2" stroke="#ff0000" stroke-width="1.4" fill="none"/><path d="M0.6 1.9 H11.1" stroke="#ff0000" stroke-width="1.8" stroke-linecap="round" fill="none"/><path d="M1.8 4.2 V13.6 Q1.8 15 3.2 15 H8.8 Q10.2 15 10.2 13.6 V4.2 Z" stroke="#ff0000" stroke-width="1.6" fill="none"/></svg></div>
<svg class="dots" style="left:1836px;top:550px" viewBox="0 0 15 4"><circle cx="2" cy="2" r="1.75" fill="#333"/><circle cx="7" cy="2" r="1.75" fill="#333"/><circle cx="12" cy="2" r="1.75" fill="#333"/></svg>
<div class="row alt" style="top:577px"></div>
<div class="tog" style="left:18px;top:591px"></div>
<div class="dn" style="left:60px;top:594px">taskflow_example</div>
<div class="own" style="left:467px;top:593px">airflow</div>
<svg class="abs" style="left:626px;top:577px" width="156" height="49" viewBox="626 577 156 49"><circle cx="642.5" cy="601.35" r="12.5" fill="none" stroke="#d6d6d6" stroke-width="1"/><circle cx="671.5" cy="601.35" r="12.5" fill="none" stroke="#d6d6d6" stroke-width="1"/><circle cx="700.5" cy="601.35" r="12.5" fill="none" stroke="#d6d6d6" stroke-width="1"/><circle cx="729.5" cy="601.35" r="12.5" fill="none" stroke="#d6d6d6" stroke-width="1"/></svg>
<div class="sch" style="left:764px;top:593px;width:39px">None</div>
<span class="info" style="left:804px;top:593px"><svg viewBox="0 0 16.5 16.5" width="16.5" height="16.5"><circle cx="8.2" cy="8.2" r="8.1" fill="#c6c6c6"/><rect x="7.1" y="4.1" width="2.2" height="1.7" fill="#fff"/><rect x="7.1" y="7.4" width="2.2" height="4.9" fill="#fff"/></svg></span>
<svg class="abs" style="left:1300px;top:577px" width="446" height="49" viewBox="1300 577 446 49"><circle cx="1317.3" cy="601.35" r="12.5" fill="none" stroke="#d6d6d6" stroke-width="1"/><circle cx="1346.3" cy="601.35" r="12.5" fill="none" stroke="#d6d6d6" stroke-width="1"/><circle cx="1375.3" cy="601.35" r="12.5" fill="none" stroke="#d6d6d6" stroke-width="1"/><circle cx="1404.3" cy="601.35" r="12.5" fill="none" stroke="#d6d6d6" stroke-width="1"/><circle cx="1433.3" cy="601.35" r="12.5" fill="none" stroke="#d6d6d6" stroke-width="1"/><circle cx="1462.3" cy="601.35" r="12.5" fill="none" stroke="#d6d6d6" stroke-width="1"/><circle cx="1491.3" cy="601.35" r="12.5" fill="none" stroke="#d6d6d6" stroke-width="1"/><circle cx="1520.3" cy="601.35" r="12.5" fill="none" stroke="#d6d6d6" stroke-width="1"/><circle cx="1549.3" cy="601.35" r="12.5" fill="none" stroke="#d6d6d6" stroke-width="1"/><circle cx="1578.3" cy="601.35" r="12.5" fill="none" stroke="#d6d6d6" stroke-width="1"/><circle cx="1607.3" cy="601.35" r="12.5" fill="none" stroke="#d6d6d6" stroke-width="1"/><circle cx="1636.3" cy="601.35" r="12.5" fill="none" stroke="#d6d6d6" stroke-width="1"/><circle cx="1665.3" cy="601.35" r="12.5" fill="none" stroke="#d6d6d6" stroke-width="1"/><circle cx="1694.3" cy="601.35" r="12.5" fill="none" stroke="#d6d6d6" stroke-width="1"/></svg>
<div class="act" style="left:1735px;top:586px"><div class="sep"></div><svg style="position:absolute;left:11px;top:7.5px" width="10" height="12" viewBox="0 0 10 12"><path d="M1 0.5 L9.5 6 L1 11.5 Z" fill="#1a5079"/></svg><svg style="position:absolute;left:40px;top:6px" width="12" height="16" viewBox="0 0 12 16"><path d="M3.8 1.2 Q5.85 -0.2 7.9 1.2" stroke="#ff0000" stroke-width="1.4" fill="none"/><path d="M0.6 1.9 H11.1" stroke="#ff0000" stroke-width="1.8" stroke-linecap="round" fill="none"/><path d="M1.8 4.2 V13.6 Q1.8 15 3.2 15 H8.8 Q10.2 15 10.2 13.6 V4.2 Z" stroke="#ff0000" stroke-width="1.6" fill="none"/></svg></div>
<svg class="dots" style="left:1836px;top:599px" viewBox="0 0 15 4"><circle cx="2" cy="2" r="1.75" fill="#333"/><circle cx="7" cy="2" r="1.75" fill="#333"/><circle cx="12" cy="2" r="1.75" fill="#333"/></svg>
<div class="row" style="top:626px"></div>
<div class="tog on" style="left:18px;top:640px"></div>
<div class="dn" style="left:60px;top:643px">zipping_examples</div>
<div class="own" style="left:467px;top:642px">airflow</div>
<svg class="abs" style="left:626px;top:626px" width="156" height="49" viewBox="626 626 156 49"><circle cx="642.5" cy="650.35" r="12.5" fill="none" stroke="#d6d6d6" stroke-width="1"/><circle cx="671.5" cy="650.35" r="12.5" fill="none" stroke="#008000" stroke-width="2"/><text x="671.5" y="653.85" text-anchor="middle" font-size="9.6" fill="#333" style="-webkit-text-stroke:0">7</text><circle cx="700.5" cy="650.35" r="12.5" fill="none" stroke="#d6d6d6" stroke-width="1"/><circle cx="729.5" cy="650.35" r="12.5" fill="none" stroke="#ff0000" stroke-width="2"/><text x="729.5" y="653.85" text-anchor="middle" font-size="9.6" fill="#333" style="-webkit-text-stroke:0">24</text></svg>
<div class="sch" style="left:764px;top:642px">1 day, 0:00:00</div>
<div class="dt lnk" style="left:949px;top:642px">2022-08-27, 19:44:42</div>
<span class="info" style="left:1080.5px;top:641.8px"><svg viewBox="0 0 16.5 16.5" width="16.5" height="16.5"><circle cx="8.2" cy="8.2" r="8.1" fill="#c6c6c6"/><rect x="7.1" y="4.1" width="2.2" height="1.7" fill="#fff"/><rect x="7.1" y="7.4" width="2.2" height="4.9" fill="#fff"/></svg></span>
<div class="dt" style="left:1129px;top:642px">2022-08-28, 19:44:42</div>
<span class="info" style="left:1260.5px;top:641.8px"><svg viewBox="0 0 16.5 16.5" width="16.5" height="16.5"><circle cx="8.2" cy="8.2" r="8.1" fill="#c6c6c6"/><rect x="7.1" y="4.1" width="2.2" height="1.7" fill="#fff"/><rect x="7.1" y="7.4" width="2.2" height="4.9" fill="#fff"/></svg></span>
<svg class="abs" style="left:1300px;top:626px" width="446" height="49" viewBox="1300 626 446 49"><circle cx="1317.3" cy="650.35" r="12.5" fill="none" stroke="#d6d6d6" stroke-width="1"/><circle cx="1346.3" cy="650.35" r="12.5" fill="none" stroke="#d6d6d6" stroke-width="1"/><circle cx="1375.3" cy="650.35" r="12.5" fill="none" stroke="#d6d6d6" stroke-width="1"/><circle cx="1404.3" cy="650.35" r="12.5" fill="none" stroke="#d6d6d6" stroke-width="1"/><circle cx="1433.3" cy="650.35" r="12.5" fill="none" stroke="#d6d6d6" stroke-width="1"/><circle cx="1462.3" cy="650.35" r="12.5" fill="none" stroke="#008000" stroke-width="2"/><text x="1462.3" y="653.85" text-anchor="middle" font-size="9.6" fill="#333" style="-webkit-text-stroke:0">3</text><circle cx="1491.3" cy="650.35" r="12.5" fill="none" stroke="#d6d6d6" stroke-width="1"/><circle cx="1520.3" cy="650.35" r="12.5" fill="none" stroke="#d6d6d6" stroke-width="1"/><circle cx="1549.3" cy="650.35" r="12.5" fill="none" stroke="#ff0000" stroke-width="2"/><text x="1549.3" y="653.85" text-anchor="middle" font-size="9.6" fill="#333" style="-webkit-text-stroke:0">6</text><circle cx="1578.3" cy="650.35" r="12.5" fill="none" stroke="#d6d6d6" stroke-width="1"/><circle cx="1607.3" cy="650.35" r="12.5" fill="none" stroke="#d6d6d6" stroke-width="1"/><circle cx="1636.3" cy="650.35" r="12.5" fill="none" stroke="#d6d6d6" stroke-width="1"/><circle cx="1665.3" cy="650.35" r="12.5" fill="none" stroke="#d6d6d6" stroke-width="1"/><circle cx="1694.3" cy="650.35" r="12.5" fill="none" stroke="#d6d6d6" stroke-width="1"/></svg>
<div class="act" style="left:1735px;top:635px"><div class="sep"></div><svg style="position:absolute;left:11px;top:7.5px" width="10" height="12" viewBox="0 0 10 12"><path d="M1 0.5 L9.5 6 L1 11.5 Z" fill="#1a5079"/></svg><svg style="position:absolute;left:40px;top:6px" width="12" height="16" viewBox="0 0 12 16"><path d="M3.8 1.2 Q5.85 -0.2 7.9 1.2" stroke="#ff0000" stroke-width="1.4" fill="none"/><path d="M0.6 1.9 H11.1" stroke="#ff0000" stroke-width="1.8" stroke-linecap="round" fill="none"/><path d="M1.8 4.2 V13.6 Q1.8 15 3.2 15 H8.8 Q10.2 15 10.2 13.6 V4.2 Z" stroke="#ff0000" stroke-width="1.6" fill="none"/></svg></div>
<svg class="dots" style="left:1836px;top:648px" viewBox="0 0 15 4"><circle cx="2" cy="2" r="1.75" fill="#333"/><circle cx="7" cy="2" r="1.75" fill="#333"/><circle cx="12" cy="2" r="1.75" fill="#333"/></svg>
<div class="abs" style="left:8px;top:746px;width:152px;height:32px;border:1px solid #ddd;border-radius:4px;font-size:11px;color:#444">
<div class="abs" style="left:0px;width:30.4px;top:0;height:30px;line-height:29px;text-align:center">&laquo;</div>
<div class="abs" style="left:30.4px;width:27.5px;top:0;height:30px;line-height:29px;text-align:center;border-left:1px solid #ddd">&lsaquo;</div>
<div class="abs" style="left:57.9px;width:34.2px;top:0;height:30px;line-height:29px;text-align:center;background:#0077b6;color:#fff;font-size:13px;top:-1px;height:32px;line-height:32px">1</div>
<div class="abs" style="left:92.1px;width:27.5px;top:0;height:30px;line-height:29px;text-align:center">&rsaquo;</div>
<div class="abs" style="left:119.6px;width:30.4px;top:0;height:30px;line-height:29px;text-align:center;border-left:1px solid #ddd">&raquo;</div>
</div>
<div class="abs" style="left:1738px;top:748px;font-size:13.06px;color:#3a3a3a;line-height:16px;white-space:nowrap">Showing 1-9 of 9 DAGs</div>
</body></html>
